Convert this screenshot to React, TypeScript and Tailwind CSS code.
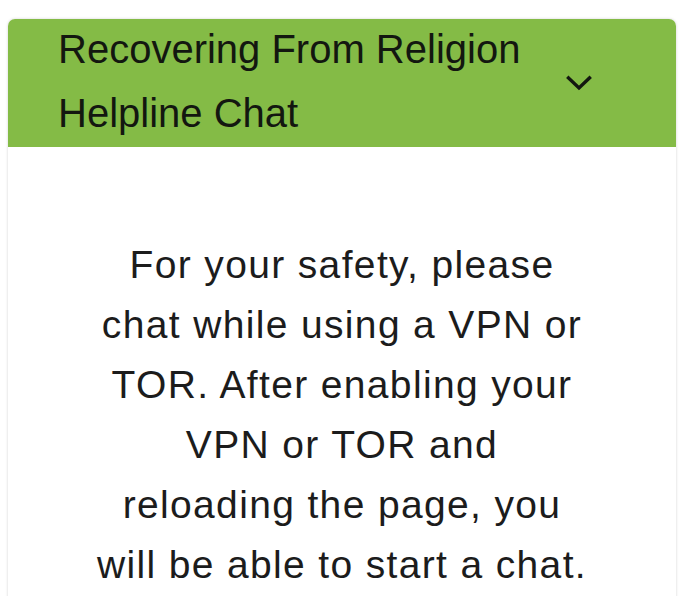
export default function App() {
  const lines = [
    "For your safety, please",
    "chat while using a VPN or",
    "TOR. After enabling your",
    "VPN or TOR and",
    "reloading the page, you",
    "will be able to start a chat.",
  ];
  return (
    <div className="w-[686px] h-[596px] overflow-hidden bg-white pt-[19px] px-[8px] font-['Liberation_Sans',Arial,sans-serif]">
      <div className="w-[668px] h-[600px] rounded-t-[7px] bg-white shadow-[0_0_3px_rgba(0,0,0,0.18)] overflow-hidden">
        <div className="h-[128px] bg-[#84bb46] flex items-center justify-between pl-[50px] pr-[84px]">
          <div className="-mt-[5px] text-[40px] leading-[64px] text-[#131710]">
            <div className="whitespace-nowrap">Recovering From Religion</div>
            <div className="whitespace-nowrap">Helpline Chat</div>
          </div>
          <svg width="26" height="16" viewBox="0 0 26 16" className="-mt-[1px]">
            <polyline points="2.5,3 13,13 23.5,3" fill="none" stroke="#131710" strokeWidth="3.4" strokeLinecap="square" strokeLinejoin="miter" />
          </svg>
        </div>
        <div className="pt-[88px] text-center text-[39px] leading-[60px] tracking-[1.35px] text-[#1c1c1c]">
          {lines.map((l) => (
            <div key={l} className="whitespace-nowrap">{l}</div>
          ))}
        </div>
      </div>
    </div>
  );
}
